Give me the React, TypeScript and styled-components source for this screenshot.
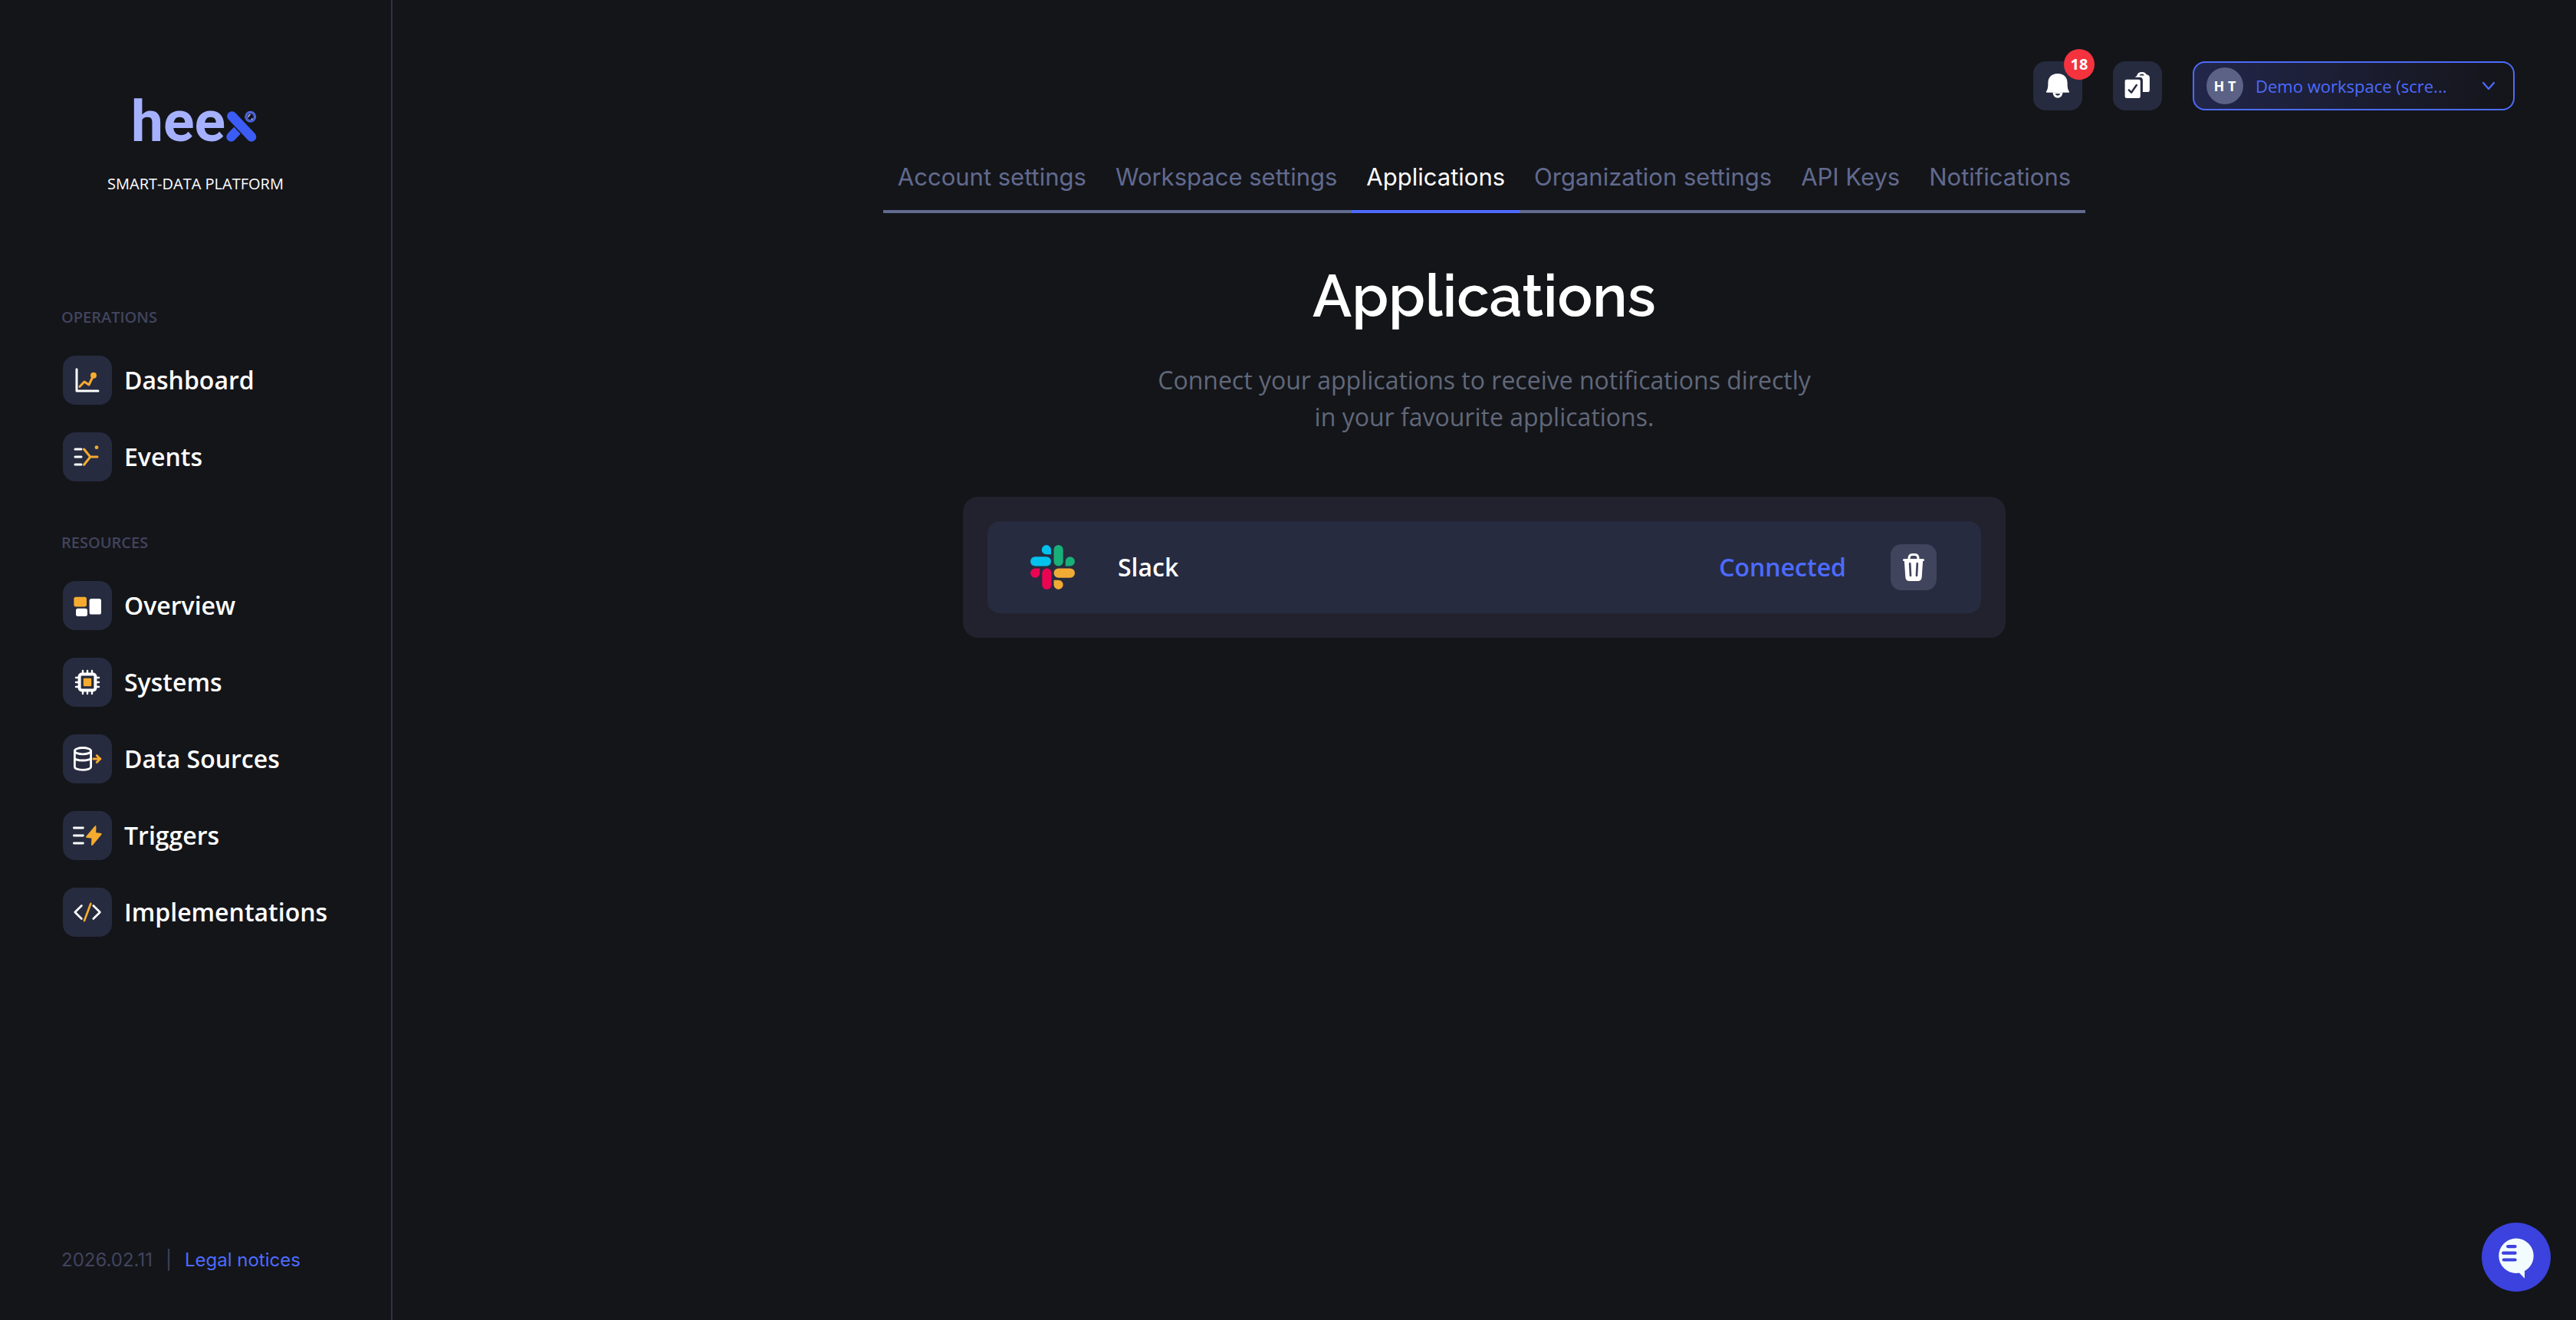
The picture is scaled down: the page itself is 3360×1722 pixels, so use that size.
import React from 'react';
import styled, { createGlobalStyle } from 'styled-components';

const color = {
  page: '#141519',
  line: '#32314a',
  tile: '#262b3f',
  card: '#21222e',
  white: '#ffffff',
  blue: '#4d6bff',
  muted: '#616a8f',
  faint: '#41445e',
  body: '#606879',
  amber: '#f6ab2f',
};
const sans = '"Open Sans", "Noto Sans", sans-serif';
const inter = 'Inter, "Liberation Sans", sans-serif';

const GlobalStyle = createGlobalStyle`
  *, *::before, *::after { box-sizing: border-box; }
  body { margin: 0; background: ${color.page}; color: ${color.white}; font-family: ${sans}; }
  h1, p, ul { margin: 0; padding: 0; }
  ul { list-style: none; }
  a { color: inherit; text-decoration: none; }
  button { border: 0; padding: 0; cursor: pointer; font-family: inherit; }
  svg { display: block; flex: none; overflow: visible; }
`;

const Page = styled.div`
  display: flex;
  min-height: 100vh;
`;

const Sidebar = styled.aside`
  flex: none;
  width: 512px;
  display: flex;
  flex-direction: column;
  padding: 128px 80px 62px;
  border-right: 2px solid ${color.line};
`;

const Brand = styled.a`
  display: flex;
  flex-direction: column;
  align-items: center;
  gap: 40px;
  margin-bottom: 146px;
  font-size: 20px;
  line-height: 28px;
`;

const Nav = styled.nav`
  display: flex;
  flex-direction: column;
  gap: 66px;
`;

const GroupLabel = styled.p`
  margin-bottom: 36px;
  font-size: 20px;
  line-height: 28px;
  font-weight: 600;
  color: ${color.faint};
`;

const NavList = styled.ul`
  display: flex;
  flex-direction: column;
  gap: 36px;
`;

const NavLink = styled.a`
  display: flex;
  align-items: center;
  gap: 16px;
  padding-left: 2px;
  font-size: 32px;
  line-height: 48px;
  font-weight: 600;
`;

const Tile = styled.span`
  width: 64px;
  height: 64px;
  flex: none;
  border-radius: 16px;
  background: ${color.tile};
`;

const SidebarFooter = styled.footer`
  display: flex;
  gap: 17px;
  margin-top: auto;
  font-family: ${inter};
  font-size: 24px;
  line-height: 32px;
  color: ${color.faint};
`;

const LegalLink = styled.a`
  color: ${color.blue};
`;

const Main = styled.main`
  flex: 1;
  min-width: 0;
  display: flex;
  flex-direction: column;
  align-items: center;
  padding: 80px;
`;

const TopBar = styled.header`
  align-self: stretch;
  display: flex;
  justify-content: flex-end;
  gap: 40px;
  margin-bottom: 62px;
`;

const TileButton = styled.button`
  position: relative;
  width: 64px;
  height: 64px;
  border-radius: 16px;
  background: ${color.tile};
`;

const Badge = styled.span`
  position: absolute;
  top: -16px;
  right: -16px;
  width: 40px;
  height: 40px;
  border-radius: 50%;
  background: #f5333f;
  color: ${color.white};
  font-size: 20px;
  line-height: 40px;
  font-weight: 700;
`;

const Workspace = styled.label`
  display: flex;
  align-items: center;
  gap: 16px;
  width: 420px;
  height: 64px;
  padding: 0 22px 0 16px;
  border: 2px solid ${color.blue};
  border-radius: 16px;
  background: linear-gradient(90deg, #22264a, ${color.page});
`;

const Avatar = styled.span`
  flex: none;
  width: 48px;
  height: 48px;
  border-radius: 50%;
  background: #5b6285;
  text-align: center;
  font-size: 18px;
  line-height: 48px;
  font-weight: 700;
`;

const WorkspaceSelect = styled.select`
  flex: 1;
  min-width: 0;
  appearance: none;
  border: 0;
  padding: 0;
  background: transparent;
  color: ${color.blue};
  font-family: ${sans};
  font-size: 22px;
  line-height: 32px;
`;

const Tabs = styled.nav`
  display: flex;
  margin-bottom: 61px;
  font-family: ${inter};
  font-size: 31px;
  line-height: 50px;
`;

const Tab = styled.a<{ $active?: boolean }>`
  padding: 0 19px 18px;
  border-bottom: 4px solid ${(p) => (p.$active ? color.blue : color.muted)};
  color: ${(p) => (p.$active ? color.white : color.muted)};
`;

const Title = styled.h1`
  margin-bottom: 37px;
  font-family: Raleway, Lato, sans-serif;
  font-size: 76px;
  line-height: 96px;
  font-weight: 600;
`;

const Lead = styled.p`
  max-width: 880px;
  margin-bottom: 80px;
  text-align: center;
  font-size: 32px;
  line-height: 48px;
  color: ${color.body};
`;

const Card = styled.section`
  width: 100%;
  max-width: 1360px;
  padding: 32px;
  border-radius: 20px;
  background: ${color.card};
`;

const AppRow = styled.div`
  display: flex;
  align-items: center;
  gap: 56px;
  padding: 30px 58px 30px 56px;
  border-radius: 16px;
  background: ${color.tile};
  font-size: 32px;
  line-height: 48px;
  font-weight: 600;
`;

const AppActions = styled.div`
  display: flex;
  align-items: center;
  gap: 58px;
  margin-left: auto;
`;

const Status = styled.span`
  color: ${color.blue};
`;

const DeleteButton = styled.button`
  width: 60px;
  height: 60px;
  border-radius: 14px;
  background: #41445d;
`;

const ChatButton = styled.button`
  position: fixed;
  right: 33px;
  bottom: 37px;
  width: 90px;
  height: 90px;
  border-radius: 50%;
  background: #3b42de;
`;

const Stroke = ({ d, tone = color.white, width = 3 }: { d: string; tone?: string; width?: number }) => (
  <path d={d} fill="none" stroke={tone} strokeWidth={width} strokeLinecap="round" strokeLinejoin="round" />
);

const TileSvg = ({ children }: { children: React.ReactNode }) => (
  <svg width="64" height="64" viewBox="0 0 64 64" aria-hidden="true">
    {children}
  </svg>
);

const DashboardIcon = () => (
  <TileSvg>
    <Stroke d="M18 17.8V46h28" />
    <Stroke d="M22 40.3 28 34l6 4 5.8-12" tone={color.amber} />
    <circle cx="40" cy="25.8" r="4" fill={color.amber} />
  </TileSvg>
);

const EventsIcon = () => (
  <TileSvg>
    <Stroke d="M16 22h8M16 32h8M16 42h8" />
    <Stroke d="M27.6 22 35.8 32l-8.2 10.3M35.8 32H45" tone={color.amber} />
    <circle cx="44" cy="19.7" r="2.4" fill={color.amber} />
  </TileSvg>
);

const OverviewIcon = () => (
  <TileSvg>
    <rect x="14.4" y="20.7" width="16.6" height="12.7" rx="2.6" fill={color.amber} />
    <rect x="17" y="35.7" width="15" height="10.2" rx="2.6" fill={color.white} />
    <rect x="34.6" y="23" width="15.4" height="20.6" rx="2.6" fill={color.white} />
  </TileSvg>
);

const SystemsIcon = () => (
  <TileSvg>
    <rect x="21.6" y="21.6" width="20.8" height="20.8" rx="3" fill="none" stroke={color.white} strokeWidth="4" />
    <rect x="26.8" y="26.8" width="10.4" height="10.4" rx="1" fill={color.amber} />
    <Stroke
      width={2.4}
      d="M26 17v4M32 17v4M38 17v4M26 43v4M32 43v4M38 43v4M17 26h4M17 32h4M17 38h4M43 26h4M43 32h4M43 38h4"
    />
  </TileSvg>
);

const SourcesIcon = () => (
  <TileSvg>
    <ellipse cx="26" cy="21.7" rx="10.6" ry="4.2" fill="none" stroke={color.white} strokeWidth="2.8" />
    <Stroke width={2.8} d="M15.4 21.7v20.6c0 5.4 21.2 5.4 21.2 0V21.7M15.4 30.4c0 4.8 21.2 4.8 21.2 0" />
    <Stroke d="M39.8 32H49M44.2 27.6 48.8 32l-4.6 4.4" tone={color.amber} width={2.8} />
  </TileSvg>
);

const TriggersIcon = () => (
  <TileSvg>
    <Stroke d="M14.4 22h12M14.4 32h12M14.4 42h12" width={2.8} />
    <path
      d="M42.5 20.2 31 33.8l7.4 1-.4 9.2L49.6 30l-7.4-1z"
      fill={color.amber}
      stroke={color.amber}
      strokeWidth="2"
      strokeLinejoin="round"
    />
  </TileSvg>
);

const CodeIcon = () => (
  <TileSvg>
    <Stroke d="M24.4 23.5 15.8 32l8.6 8.5M39.8 23.5l8.6 8.5-8.6 8.5" width={2.7} />
    <Stroke d="M36.3 21 28 43" tone={color.amber} width={2.7} />
  </TileSvg>
);

const BellIcon = () => (
  <TileSvg>
    <path
      d="M32 16c-8.300 0-12.600 5.200-12.600 12 0 6-.6 8.800-2.300 11.300-.4.700-.1 1.500.7 1.500h28.400c.8 0 1.100-.8.700-1.500-1.700-2.500-2.300-5.300-2.300-11.300 0-6.800-4.300-12-12.600-12z"
      fill={color.white}
    />
    <path d="M25.500 40.500a6.500 7.300 0 0 0 13 0z" fill={color.white} />
    <path d="M28.600 42.200a3.500 3.200 0 0 0 6.800 0z" fill={color.tile} />
  </TileSvg>
);

const ChecklistIcon = () => (
  <TileSvg>
    <path
      d="M28.300 20.800c1.500-.8 3-1.600 3.500-3.300.5-2.200 2.600-3.600 5.900-3.600s5.400 1.400 6 3.400c2.600.3 4.200 1.700 4.200 4.300v15.600c0 1.900-1 2.900-2.900 2.900h-6.100V24.700c0-2.500-1.400-3.900-3.900-3.900z"
      fill={color.white}
    />
    <path d="M34.600 18.600c.3-1.300 1.400-2 3.100-2s2.800.7 3.100 2z" fill={color.tile} />
    <rect x="15.600" y="23.800" width="20.200" height="24.200" rx="2.200" fill={color.white} />
    <Stroke d="m20.800 37.400 3.200 3.400 6.800-9.800" tone={color.tile} width={2.400} />
  </TileSvg>
);

const TrashIcon = () => (
  <svg width="60" height="60" viewBox="0 0 60 60" aria-hidden="true">
    <Stroke d="M24 19c0-3.600 1.400-5.400 4.200-5.400h3.600c2.800 0 4.200 1.800 4.200 5.400" width={3} />
    <Stroke d="M17.500 20.400h25" width={3} />
    <path d="M17.800 20.500h24.400l-1.500 22c-.2 3.700-2 5.500-5.400 5.500H24.700c-3.400 0-5.200-1.800-5.400-5.500z" fill={color.white} />
    <Stroke d="m25.200 25.200.8 15.600M34.800 25.200l-.8 15.600" tone="#41445d" width={2.700} />
  </svg>
);

const ChatIcon = () => (
  <svg width="90" height="90" viewBox="0 0 90 90" aria-hidden="true">
    <circle cx="45" cy="43.300" r="22.700" fill="#f2fcff" />
    <path d="M48 64.500 56 72.700V60z" fill="#f2fcff" />
    <rect x="32" y="29" width="13.700" height="4.200" rx="2.100" fill="#3b42de" />
    <rect x="26" y="37.600" width="19.700" height="4.200" rx="2.100" fill="#3b42de" />
    <rect x="26.700" y="46.400" width="19" height="4.200" rx="2.100" fill="#3b42de" />
  </svg>
);

const SlackLogo = () => (
  <svg width="58" height="58" viewBox="0 0 58 58" aria-hidden="true">
    <path d="M27 12.300V6.200A6.100 6.100 0 1 0 20.900 12.300z" fill="#02c2ed" />
    <rect x="0" y="15.300" width="27" height="12.200" rx="6.100" fill="#02c2ed" />
    <rect x="30.500" y="0" width="12.200" height="27.500" rx="6.100" fill="#19af78" />
    <path d="M45.700 27.500h6.100a6.100 6.100 0 1 0-6.100-6.100z" fill="#19af78" />
    <rect x="30.500" y="30.500" width="27.500" height="12.200" rx="6.100" fill="#f0ab35" />
    <path d="M30.500 45.700v6.100a6.100 6.100 0 1 0 6.100-6.100z" fill="#f0ab35" />
    <rect x="15.300" y="30.500" width="12.200" height="27.500" rx="6.100" fill="#ea0553" />
    <path d="M12.300 30.500H6.200a6.100 6.100 0 1 0 6.100 6.100z" fill="#ea0553" />
  </svg>
);

const HeexLogo = () => (
  <svg width="160" height="58" viewBox="0 0 160 58" role="img" aria-label="heex">
    <text x="-4" y="56" fontFamily="Roboto, sans-serif" fontWeight="700" fontSize="75" fill="#a5b1ff">
      hee
    </text>
    <path d="M126.500 50.500 137 39.500" stroke="#3c5cf6" strokeWidth="12.400" strokeLinecap="round" />
    <path d="M127.500 23.500 153 50.500" stroke="#141519" strokeWidth="15.500" />
    <path d="M127.500 23.500 153 50.500" stroke="#3c5cf6" strokeWidth="12.600" strokeLinecap="round" />
    <circle cx="151.700" cy="24.300" r="6.400" fill="#0d1230" stroke="#4c66e8" strokeWidth="2.200" />
    <circle cx="151.700" cy="24.300" r="4.600" fill="none" stroke="#8a9bff" strokeWidth=".9" />
    <path d="M149 24.500c.2-1.400.9-2.300 2.200-2.800" fill="none" stroke="#dfe4ff" strokeWidth="1.300" strokeLinecap="round" />
    <circle cx="153.600" cy="27.200" r="1" fill="#c3ccff" />
  </svg>
);

const groups = [
  {
    label: 'OPERATIONS',
    items: [
      { name: 'Dashboard', Icon: DashboardIcon },
      { name: 'Events', Icon: EventsIcon },
    ],
  },
  {
    label: 'RESOURCES',
    items: [
      { name: 'Overview', Icon: OverviewIcon },
      { name: 'Systems', Icon: SystemsIcon },
      { name: 'Data Sources', Icon: SourcesIcon },
      { name: 'Triggers', Icon: TriggersIcon },
      { name: 'Implementations', Icon: CodeIcon },
    ],
  },
];

const tabs = [
  'Account settings',
  'Workspace settings',
  'Applications',
  'Organization settings',
  'API Keys',
  'Notifications',
];

export default function App() {
  return (
    <>
      <GlobalStyle />
      <Page>
        <Sidebar>
          <Brand href="#">
            <HeexLogo />
            <span>SMART-DATA PLATFORM</span>
          </Brand>
          <Nav>
            {groups.map(({ label, items }) => (
              <div key={label}>
                <GroupLabel>{label}</GroupLabel>
                <NavList>
                  {items.map(({ name, Icon }) => (
                    <li key={name}>
                      <NavLink href="#">
                        <Tile>
                          <Icon />
                        </Tile>
                        {name}
                      </NavLink>
                    </li>
                  ))}
                </NavList>
              </div>
            ))}
          </Nav>
          <SidebarFooter>
            <span>2026.02.11</span>
            <span>|</span>
            <LegalLink href="#">Legal notices</LegalLink>
          </SidebarFooter>
        </Sidebar>

        <Main>
          <TopBar>
            <TileButton type="button" aria-label="Alerts">
              <BellIcon />
              <Badge>18</Badge>
            </TileButton>
            <TileButton type="button" aria-label="Tasks">
              <ChecklistIcon />
            </TileButton>
            <Workspace>
              <Avatar>H T</Avatar>
              <WorkspaceSelect aria-label="Workspace">
                <option>Demo workspace (scre...</option>
              </WorkspaceSelect>
              <svg width="20" height="14" viewBox="0 0 20 14" aria-hidden="true">
                <Stroke d="m3 3 7 8 7-8" tone={color.blue} width={2.2} />
              </svg>
            </Workspace>
          </TopBar>

          <Tabs>
            {tabs.map((name) => (
              <Tab key={name} href="#" $active={name === 'Applications'}>
                {name}
              </Tab>
            ))}
          </Tabs>

          <Title>Applications</Title>
          <Lead>Connect your applications to receive notifications directly in your favourite applications.</Lead>

          <Card>
            <AppRow>
              <SlackLogo />
              <span>Slack</span>
              <AppActions>
                <Status>Connected</Status>
                <DeleteButton type="button" aria-label="Disconnect Slack">
                  <TrashIcon />
                </DeleteButton>
              </AppActions>
            </AppRow>
          </Card>
        </Main>
      </Page>
      <ChatButton type="button" aria-label="Open chat">
        <ChatIcon />
      </ChatButton>
    </>
  );
}
